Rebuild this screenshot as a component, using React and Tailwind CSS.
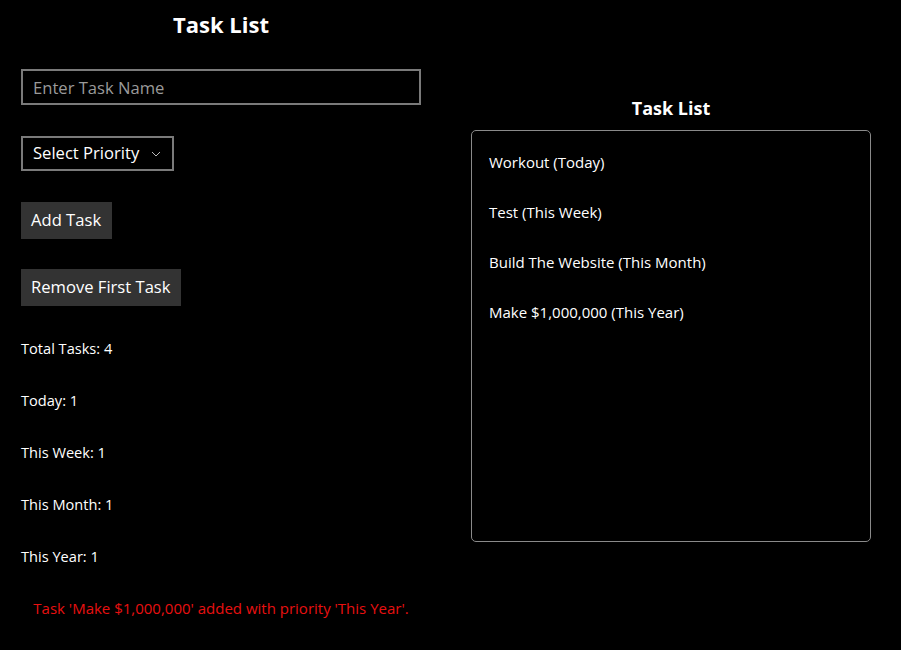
export default function App() {
  const stats = [
    ['Total Tasks', 4],
    ['Today', 1],
    ['This Week', 1],
    ['This Month', 1],
    ['This Year', 1],
  ]
  const tasks = [
    'Workout (Today)',
    'Test (This Week)',
    'Build The Website (This Month)',
    'Make $1,000,000 (This Year)',
  ]

  return (
    <div className="w-[901px] h-[650px] bg-black text-white overflow-hidden flex font-['Open_Sans',sans-serif]">
      <div className="w-[400px] ml-[21px] flex flex-col">
        <h1 className="text-[22px] font-bold text-center leading-none mt-[13px]">Task List</h1>
        <input
          placeholder="Enter Task Name"
          className="mt-[34px] h-[36px] w-[400px] border-2 border-[#7a7a7a] bg-black px-[10px] text-[16.6px] text-white placeholder:text-[#9a9a9a] outline-none"
        />
        <div className="mt-[31px] h-[35px] w-[153px] border-2 border-[#7a7a7a] flex items-center pl-[10px] text-[16.6px]">
          <span>Select Priority</span>
          <svg className="ml-[12px]" width="10" height="6" viewBox="0 0 10 6" fill="none" stroke="#bbb" strokeWidth="1">
            <path d="M1 1l4 4 4-4" />
          </svg>
        </div>
        <button className="mt-[31px] h-[37px] w-[91px] bg-[#333] text-[16.6px] text-left pl-[10px]">Add Task</button>
        <button className="mt-[30px] h-[37px] w-[160px] bg-[#333] text-[16.6px] text-left pl-[10px]">Remove First Task</button>
        <div className="mt-[32px] flex flex-col gap-[32px] text-[14.6px] leading-[20px]">
          {stats.map(([k, v]) => (
            <div key={k}>{k}: {v}</div>
          ))}
        </div>
        <div className="mt-[32px] text-center text-[15px] leading-[20px] text-[#e81010]">
          Task 'Make $1,000,000' added with priority 'This Year'.
        </div>
      </div>
      <div className="w-[400px] ml-[50px] flex flex-col">
        <h2 className="text-[18px] font-bold text-center leading-none mt-[99px]">Task List</h2>
        <div className="mt-[13px] h-[412px] border border-[#8a8a8a] rounded-[5px] pt-[21px] px-[17px] flex flex-col gap-[30px] text-[15px] leading-[20px]">
          {tasks.map(t => (
            <div key={t}>{t}</div>
          ))}
        </div>
      </div>
    </div>
  )
}
